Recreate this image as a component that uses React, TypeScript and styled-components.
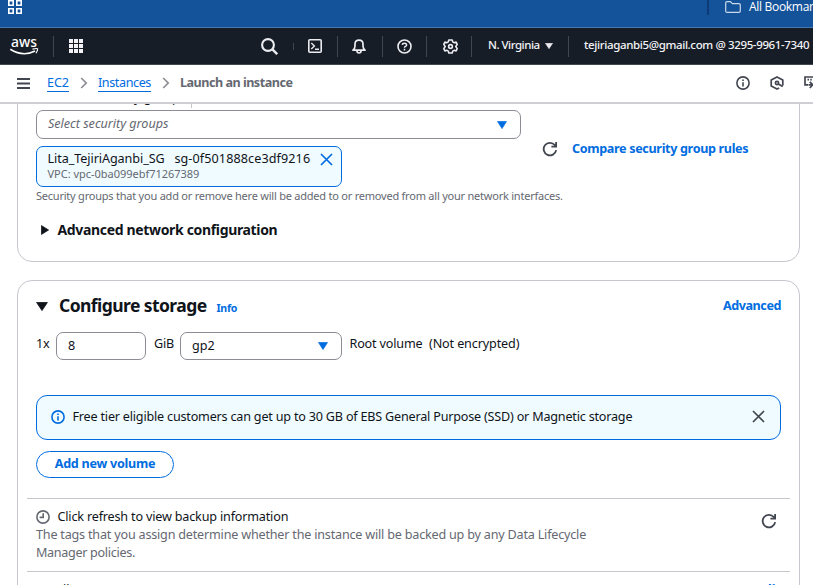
import React from 'react';
import styled, { createGlobalStyle, css } from 'styled-components';

const GlobalStyle = createGlobalStyle`
  * { box-sizing: border-box; }
  body { margin: 0; background: #fff; overflow: hidden; }
  svg { display: block; flex: none; }
`;

const Page = styled.div`
  width: 813px;
  height: 585px;
  overflow: hidden;
  display: flex;
  flex-direction: column;
  font: 400 12.6px/18px 'Noto Sans', sans-serif;
  color: #0f141a;
`;

type TextProps = {
  $size?: number; $track?: number; $bold?: boolean; $italic?: boolean; $color?: string;
};
const Text = styled.span<TextProps>`
  white-space: nowrap;
  flex: none;
  font-size: ${p => p.$size ?? 12.6}px;
  letter-spacing: ${p => p.$track ?? 0}px;
  ${p => p.$bold && css`font-weight: 700;`}
  ${p => p.$italic && css`font-style: italic;`}
  ${p => p.$color && css`color: ${p.$color};`}
`;

/* browser bookmarks strip */
const BookmarksBar = styled.div`
  height: 28px;
  flex: none;
  display: flex;
  justify-content: space-between;
  background: #14539a;
  border-bottom: 1px solid #4478ae;
  padding-left: 8px;
`;
const AllBookmarks = styled.div`
  width: 106px;
  display: flex;
  align-items: flex-start;
`;
const BarLine = styled.i`
  width: 2px;
  height: 15px;
  flex: none;
  background: #0c3b78;
  margin-right: 16px;
`;
const BookmarkLabel = styled.span`
  font: 400 12px/14px 'Open Sans', sans-serif;
  letter-spacing: -0.3px;
  color: #fff;
  white-space: nowrap;
  margin-left: 8px;
`;

/* console navigation */
const NavBar = styled.nav`
  height: 37px;
  flex: none;
  display: flex;
  align-items: center;
  background: #161d26;
  border-bottom: 1px solid #414750;
  color: #ebebf0;
`;
const NavCell = styled.div<{ $w?: number; $align?: string; $pad?: number }>`
  ${p => p.$w ? css`width: ${p.$w}px;` : css`flex: 1;`}
  flex-shrink: 0;
  display: flex;
  align-items: center;
  justify-content: ${p => p.$align ?? 'center'};
  padding-left: ${p => p.$pad ?? 0}px;
`;
const NavSep = styled.i<{ $short?: boolean }>`
  width: 1px;
  height: ${p => (p.$short ? 7 : 21)}px;
  background: #424650;
  flex: none;
`;
const NavText = styled(Text)`
  font-weight: 500;
  color: #f3f3f7;
  line-height: 16px;
  margin-bottom: 2px;
`;

const Breadcrumbs = styled.div`
  height: 39px;
  flex: none;
  display: flex;
  align-items: center;
  padding: 0 0 1px 17px;
  border-bottom: 2px solid #d0d0d4;
  color: #424650;
`;
const MenuIcon = styled.svg`
  margin-right: 17px;
`;
const Crumb = styled.a<{ $track: number; $w: number }>`
  color: #006ce0;
  width: ${p => p.$w}px;
  white-space: nowrap;
  letter-spacing: ${p => p.$track}px;
  border-bottom: 1px solid #006ce0;
  line-height: 16px;
`;
const Chevron = styled.div`
  width: 29px;
  display: flex;
  justify-content: center;
`;
const PageTools = styled.div`
  width: 77px;
  margin-left: auto;
  display: flex;
  gap: 20px;
`;

const Content = styled.main`
  flex: 1;
  min-height: 0;
  overflow: hidden;
  padding: 0 13px 0 17px;
`;
const Card = styled.section<{ $h: number }>`
  height: ${p => p.$h}px;
  border: 1px solid #c6c6cd;
  border-radius: 15px;
  display: flex;
  flex-direction: column;
`;
const NetworkCard = styled(Card)`
  margin: -40px 0 18px;
  padding: 23px 18px 0;
`;
const StorageCard = styled(Card)`
  padding: 14px 18px 0;
`;
const LabelRow = styled.div`
  display: flex;
  align-items: center;
  height: 20px;
  margin-bottom: 2px;
`;
const LabelLine = styled.i`
  width: 1px;
  height: 16px;
  background: #c6c6cd;
  margin: 4px 8px 0 5px;
`;
const GroupRow = styled.div`
  display: flex;
  height: 77px;
`;
const GroupPicker = styled.div`
  width: 485px;
  display: flex;
  flex-direction: column;
  gap: 7px;
`;
const Field = styled.div<{ $w?: number; $h: number; $padRight?: number }>`
  width: ${p => (p.$w ? p.$w + 'px' : '100%')};
  height: ${p => p.$h}px;
  flex: none;
  display: flex;
  align-items: center;
  justify-content: space-between;
  border: 1px solid #8c8c94;
  border-radius: 7px;
  padding: 0 ${p => p.$padRight ?? 10}px 0 11px;
`;
const FieldText = styled(Text)`
  line-height: 17px;
  margin-bottom: 2px;
`;
const Token = styled.div`
  width: 306px;
  height: 41px;
  border: 1px solid #006ce0;
  border-radius: 7px;
  background: #f0fbff;
  padding: 4px 8px 0 10.5px;
  display: flex;
  flex-direction: column;
`;
const TokenTop = styled.div`
  display: flex;
  height: 16px;
  align-items: center;
  justify-content: space-between;
`;
const TokenSub = styled(Text)`
  line-height: 14px;
`;
const GroupActions = styled.div`
  display: flex;
  align-items: center;
  gap: 14px;
  padding-left: 21px;
`;
const Hint = styled(Text)`
  line-height: 16px;
  margin-top: 1px;
`;
const Expander = styled.div`
  display: flex;
  align-items: center;
  gap: 8.5px;
  height: 20px;
  margin-top: 16px;
  padding-left: 5px;
`;

const CardHeader = styled.header`
  display: flex;
  align-items: center;
  height: 21px;
  svg { margin-top: 1px; }
`;
const HeaderTitle = styled(Text)`
  margin: -2px 0 0 11px;
  width: 148px;
`;
const HeaderInfo = styled(Text)`
  margin: 5px auto 0 9.5px;
`;
const VolumeRow = styled.div`
  display: flex;
  align-items: center;
  height: 28px;
  margin-top: 16px;
`;
const VolumeText = styled(Text)<{ $w: number; $gap?: number }>`
  width: ${p => p.$w}px;
  margin: -4px 0 0 ${p => p.$gap ?? 0}px;
`;
const Alert = styled.div`
  height: 45px;
  margin-top: 35px;
  display: flex;
  align-items: center;
  gap: 7.5px;
  border: 1px solid #006ce0;
  border-radius: 11px;
  background: #f0fbff;
  padding: 0 15px 2px 14px;
  svg:last-child { margin-left: auto; }
`;
const Button = styled.button`
  width: 138px;
  height: 27px;
  margin-top: 11px;
  padding: 0 0 1px;
  border: 1px solid #006ce0;
  border-radius: 14px;
  background: #fff;
  color: #006ce0;
  font: 700 12.6px/18px 'Noto Sans', sans-serif;
  letter-spacing: -0.26px;
`;
const Divider = styled.hr<{ $top?: number }>`
  border: 0;
  height: 1px;
  margin: ${p => p.$top ?? 0}px -9px 0;
  background: #c6c6cd;
  flex: none;
`;
const Backup = styled.div`
  display: flex;
  justify-content: space-between;
  height: 72px;
  flex: none;
  padding: 9px 4px 0 0;
`;
const RefreshSlot = styled.div`
  padding-top: 5px;
`;
const BackupText = styled.div`
  display: flex;
  flex-direction: column;
`;
const BackupTitle = styled.div`
  display: flex;
  align-items: center;
  gap: 7.5px;
`;
const FileSystems = styled.div`
  display: flex;
  justify-content: space-between;
  padding-top: 9px;
`;

const BLUE = '#006ce0';
const GREY = '#656871';

const Caret = ({ w = 10, h = 8, color = BLUE, right = false }) => (
  <svg width={w} height={h} viewBox="0 0 10 10" preserveAspectRatio="none" fill={color} stroke={color} strokeWidth="0.8" strokeLinejoin="round">
    <path d={right ? 'M.5.5 9.5 5 .5 9.5Z' : 'M.5.5H9.5L5 9.5Z'} />
  </svg>
);
const Close = ({ color = '#424650' }) => (
  <svg width="13" height="13" viewBox="0 0 13 13" stroke={color} strokeWidth="1.7"><path d="M1 1 12 12M12 1 1 12" /></svg>
);
const Refresh = () => (
  <svg width="16" height="16" viewBox="0 0 16 16" fill="none" stroke="#424650" strokeWidth="1.8">
    <path d="M14.2 9.2A6.3 6.3 0 1 1 12.8 4L14 5.3M14.1.9V5.6H9.4" />
  </svg>
);
const InfoCircle = ({ color = '#424650' }) => (
  <svg width="14" height="14" viewBox="0 0 14 14" fill="none" stroke={color} strokeWidth="1.6">
    <circle cx="7" cy="7" r="6.1" /><path d="M7 6.2V10.4M7 3.5V5" />
  </svg>
);
const ChevronIcon = () => (
  <svg width="8" height="12" viewBox="0 0 8 12" fill="none" stroke="#8c8c94" strokeWidth="1.7"><path d="M1.2 1 6.2 6 1.2 11" /></svg>
);

const BookmarkApps = () => (
  <svg width="14" height="14" viewBox="0 0 14 14" fill="none" stroke="#fff" strokeWidth="1.6">
    <path d="M.8.8H5.2V5.2H.8ZM8.8.8H13.2V5.2H8.8ZM.8 8.8H5.2V13.2H.8ZM8.8 8.8H13.2V13.2H8.8Z" />
  </svg>
);
const Folder = () => (
  <svg width="16" height="14" viewBox="0 0 16 14" fill="none" stroke="#c9d8ea" strokeWidth="1.2">
    <path d="M.7 11V3Q.7 1.6 2.1 1.6H5.4L7.4 3.6H13.9Q15.3 3.6 15.3 5V11Q15.3 12.4 13.9 12.4H2.1Q.7 12.4.7 11Z" />
  </svg>
);
const AwsLogo = () => (
  <svg width="30" height="22" viewBox="0 0 30 22" overflow="visible">
    <text x="1" y="12" textLength="26" lengthAdjust="spacingAndGlyphs" fontFamily="Noto Sans, sans-serif" fontSize="15" fontWeight="500" fill="#fff">aws</text>
    <path d="M.3 14.2Q13 22.2 25 16" fill="none" stroke="#fff" strokeWidth="1.6" />
    <path d="M22.5 14.2Q27 13 27.6 13.8 28 15 26 18.2" fill="none" stroke="#fff" strokeWidth="1.2" />
  </svg>
);
const AppGrid = () => (
  <svg width="14" height="14" viewBox="0 0 14 14" fill="#f3f3f7">
    {[0, 5, 10].map(y => [0, 5, 10].map(x => <rect key={x + '-' + y} x={x} y={y} width="4" height="4" />))}
  </svg>
);

export default function App() {
  return (
    <Page>
      <GlobalStyle />
      <BookmarksBar>
        <BookmarkApps />
        <AllBookmarks>
          <BarLine /><Folder /><BookmarkLabel>All Bookmarks</BookmarkLabel>
        </AllBookmarks>
      </BookmarksBar>

      <NavBar>
        <NavCell $w={53} $align="flex-start" $pad={10}><AwsLogo /></NavCell>
        <NavSep />
        <NavCell $w={207} $align="flex-start" $pad={15}><AppGrid /></NavCell>
        <NavCell $w={32} $align="flex-start">
          <svg width="17" height="17" viewBox="0 0 17 17" fill="none" stroke="#ebebf0" strokeWidth="2.1">
            <circle cx="7" cy="7" r="5.9" /><path d="M11.2 11.2 16.2 16.2" strokeWidth="2.4" />
          </svg>
        </NavCell>
        <NavSep $short />
        <NavCell $w={43} $align="flex-start" $pad={14}>
          <svg width="14" height="14" viewBox="0 0 14 14" fill="none" stroke="#ebebf0" strokeWidth="1.6">
            <rect x=".8" y=".8" width="12.4" height="12.4" rx="1" /><path d="M3.3 4 6.4 7 3.3 10M7 10.3H11" strokeWidth="1.4" />
          </svg>
        </NavCell>
        <NavSep />
        <NavCell $w={44} $align="flex-start" $pad={14}>
          <svg width="14" height="15" viewBox="0 0 14 15" fill="none" stroke="#ebebf0" strokeWidth="1.7" strokeLinejoin="round">
            <path d="M1 11.2Q3 9.5 3 7V5.2Q3 1.2 7 1.2T11 5.2V7Q11 9.5 13 11.2ZM4.9 11.5Q5 14 7 14T9.1 11.5" />
          </svg>
        </NavCell>
        <NavSep />
        <NavCell $w={43}>
          <svg width="15" height="15" viewBox="0 0 15 15" fill="none" stroke="#ebebf0" strokeWidth="1.6">
            <circle cx="7.5" cy="7.5" r="6.5" /><path d="M5.3 5.9Q5.4 4.2 7.5 4.2T9.6 6Q9.6 7 8.5 7.4T7.5 8.8M7.5 9.8V11.4" strokeWidth="1.5" />
          </svg>
        </NavCell>
        <NavSep />
        <NavCell $w={44} $pad={2}>
          <svg width="15" height="15" viewBox="0 0 15 15" fill="none" stroke="#ebebf0" strokeWidth="1.6" strokeLinejoin="round">
            <path d="M5.8 1H9.2L9.7 2.9 11.3 3.7 13.1 3.1 14.2 5.4 12.8 7.5 14.2 9.6 13.1 11.9 11.3 11.3 9.7 12.1 9.2 14H5.8L5.3 12.1 3.7 11.3 1.9 11.9.8 9.6 2.2 7.5.8 5.4 1.9 3.1 3.7 3.7 5.3 2.9Z" />
            <circle cx="7.5" cy="7.5" r="1.9" />
          </svg>
        </NavCell>
        <NavSep />
        <NavCell $w={96} $align="flex-start" $pad={16}>
          <NavText $size={11.5} $track={-0.5}>N. Virginia&nbsp;&nbsp;</NavText>
          <Caret w={8} h={6} color="#ebebf0" />
        </NavCell>
        <NavSep />
        <NavCell $align="flex-start" $pad={15}>
          <NavText $size={11.5} $track={-0.37}>tejiriaganbi5@gmail.com @ 3295-9961-7340</NavText>
        </NavCell>
      </NavBar>

      <Breadcrumbs>
        <MenuIcon width="13" height="11" viewBox="0 0 13 11" stroke="#424650" strokeWidth="1.9"><path d="M0 1H13M0 5.5H13M0 10H13" /></MenuIcon>
        <Crumb $w={22} $track={-0.06}>EC2</Crumb>
        <Chevron><ChevronIcon /></Chevron>
        <Crumb $w={53} $track={-0.41}>Instances</Crumb>
        <Chevron><ChevronIcon /></Chevron>
        <Text $bold $track={-0.5} $color={GREY}>Launch an instance</Text>
        <PageTools>
          <InfoCircle />
          <svg width="14" height="14" viewBox="0 0 14 14" fill="none" stroke="#424650" strokeWidth="1.7" strokeLinejoin="round">
            <path d="M12.8 9.5V3.9L7 .9 1.2 3.9V10.1L7 13.1 9.2 12" /><circle cx="7" cy="7" r="1.6" /><path d="M7.8 7.7 12.8 10.6" />
          </svg>
          <svg width="14" height="14" viewBox="0 0 14 14" fill="none" stroke="#424650" strokeWidth="1.7">
            <path d="M13 5V1H1V8.8H4.5M5 8.8H8M5.8 5.8 8.8 8.8 5.8 12M3.5 3.7H5M6.3 3.7H7.8" />
          </svg>
        </PageTools>
      </Breadcrumbs>

      <Content>
        <NetworkCard $h={198}>
          <LabelRow>
            <Text $track={0.02}>Common security groups</Text>
            <LabelLine />
            <Text $size={10.6} $bold $color={BLUE}>Info</Text>
          </LabelRow>
          <GroupRow>
            <GroupPicker>
              <Field $h={29} $padRight={13}>
                <FieldText $italic $track={-0.02} $color={GREY}>Select security groups</FieldText>
                <Caret />
              </Field>
              <Token>
                <TokenTop>
                  <Text $track={-0.07}>Lita_TejiriAganbi_SG</Text>
                  <Text $track={0.1}>sg-0f501888ce3df9216</Text>
                  <Close color={BLUE} />
                </TokenTop>
                <TokenSub $size={11} $track={-0.02} $color={GREY}>VPC: vpc-0ba099ebf71267389</TokenSub>
              </Token>
            </GroupPicker>
            <GroupActions>
              <Refresh />
              <Text $bold $track={-0.34} $color={BLUE}>Compare security group rules</Text>
            </GroupActions>
          </GroupRow>
          <Hint $size={11} $track={-0.225} $color={GREY}>
            Security groups that you add or remove here will be added to or removed from all your network interfaces.
          </Hint>
          <Expander>
            <Caret w={8} h={10} color="#0f141a" right />
            <Text $size={14} $bold $track={-0.34}>Advanced network configuration</Text>
          </Expander>
        </NetworkCard>

        <StorageCard $h={400}>
          <CardHeader>
            <Caret w={12} h={9} color="#0f141a" />
            <HeaderTitle $size={17.5} $bold $track={-0.57}>Configure storage</HeaderTitle>
            <HeaderInfo $size={10.6} $bold $track={-0.25} $color={BLUE}>Info</HeaderInfo>
            <Text $bold $track={-0.45} $color={BLUE}>Advanced</Text>
          </CardHeader>
          <VolumeRow>
            <VolumeText $w={20} $track={-0.19}>1x</VolumeText>
            <Field $w={90} $h={28}><Text>8</Text></Field>
            <VolumeText $gap={8} $w={26} $track={-0.25}>GiB</VolumeText>
            <Field $w={162} $h={28} $padRight={13}><Text>gp2</Text><Caret /></Field>
            <VolumeText $gap={7.5} $w={79.5} $track={-0.167}>Root volume</VolumeText>
            <VolumeText $w={92} $track={-0.13}>(Not encrypted)</VolumeText>
          </VolumeRow>
          <Alert>
            <InfoCircle color={BLUE} />
            <Text $track={-0.198}>Free tier eligible customers can get up to 30 GB of EBS General Purpose (SSD) or Magnetic storage</Text>
            <Close />
          </Alert>
          <Button>Add new volume</Button>
          <Divider $top={20} />
          <Backup>
            <BackupText>
              <BackupTitle>
                <svg width="14" height="14" viewBox="0 0 14 14" fill="none" stroke={GREY} strokeWidth="1.6">
                  <circle cx="7" cy="7" r="6.1" /><path d="M7.2 3.2V7.4H3.6" />
                </svg>
                <Text $track={-0.175}>Click refresh to view backup information</Text>
              </BackupTitle>
              <Text $track={-0.2} $color={GREY}>The tags that you assign determine whether the instance will be backed up by any Data Lifecycle</Text>
              <Text $track={-0.317} $color={GREY}>Manager policies.</Text>
            </BackupText>
            <RefreshSlot><Refresh /></RefreshSlot>
          </Backup>
          <Divider />
          <FileSystems>
            <Text>0 x File systems</Text>
            <Text $bold $color={BLUE}>Edit</Text>
          </FileSystems>
        </StorageCard>
      </Content>
    </Page>
  );
}
